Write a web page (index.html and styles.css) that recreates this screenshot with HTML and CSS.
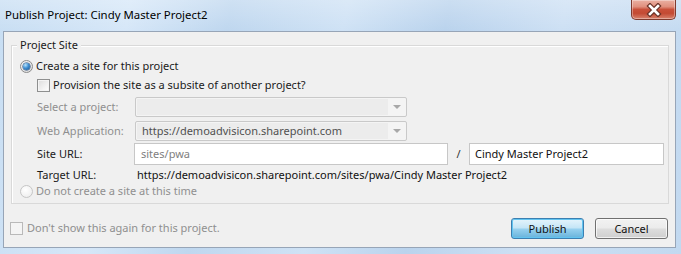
FILE: index.html
```html
<!DOCTYPE html>
<html>
<head>
<meta charset="utf-8">
<title>Publish Project</title>
<link rel="stylesheet" href="styles.css">
</head>
<body>
<div class="window">
  <div class="titlebar">
    <span class="title">Publish Project: Cindy Master Project2</span>
    <div class="close">
      <svg width="20" height="14" viewBox="0 0 20 14">
        <path d="M6 3 L14 11 M14 3 L6 11" stroke="#6b3328" stroke-width="5" stroke-linecap="square" fill="none"/>
        <path d="M6 3 L14 11 M14 3 L6 11" stroke="#ffffff" stroke-width="2.6" stroke-linecap="square" fill="none"/>
      </svg>
    </div>
  </div>
  <div class="client">
    <div class="group">
      <span class="legend">Project Site</span>
      <div class="row r-radio1">
        <span class="radio checked"><span class="dot"></span></span>
        <span class="txt">Create a site for this project</span>
      </div>
      <div class="row r-check">
        <span class="check"></span>
        <span class="txt">Provision the site as a subsite of another project?</span>
      </div>
      <div class="row r-field r-combo1">
        <span class="lbl disabled">Select a project:</span>
        <div class="combo"><span class="combo-text"></span><span class="arrow"></span></div>
      </div>
      <div class="row r-field r-combo2">
        <span class="lbl disabled">Web Application:</span>
        <div class="combo"><span class="combo-text">https://demoadvisicon.sharepoint.com</span><span class="arrow"></span></div>
      </div>
      <div class="row r-field r-url">
        <span class="lbl lbl-url">Site URL:</span>
        <div class="input input-site"><span class="ph">sites/pwa</span></div>
        <span class="slash">/</span>
        <div class="input input-name">Cindy Master Project2</div>
      </div>
      <div class="row r-field r-target">
        <span class="lbl lbl-target">Target URL:</span>
        <span class="target">https://demoadvisicon.sharepoint.com/sites/pwa/Cindy Master Project2</span>
      </div>
      <div class="row r-radio2">
        <span class="radio off"></span>
        <span class="txt disabled">Do not create a site at this time</span>
      </div>
    </div>
    <div class="footer">
      <div class="dontshow">
        <span class="check off"></span>
        <span class="txt disabled">Don't show this again for this project.</span>
      </div>
      <div class="buttons">
        <button class="btn btn-default" type="button">Publish</button>
        <button class="btn" type="button">Cancel</button>
      </div>
    </div>
  </div>
</div>
</body>
</html>
```
FILE: styles.css
```css
html, body {
  margin: 0;
  padding: 0;
}
body {
  width: 681px;
  height: 254px;
  overflow: hidden;
  font-family: "Noto Sans", "Open Sans", sans-serif;
  font-size: 11px;
  color: #1a1a1a;
}
.window {
  width: 681px;
  height: 254px;
  box-sizing: border-box;
  display: flex;
  flex-direction: column;
  background:
    linear-gradient(180deg, rgba(255,255,255,0.25) 0px, rgba(255,255,255,0) 30px),
    linear-gradient(100deg, #c8def3 0%, #d6e7f8 18%, #bfd7ef 32%, #cfe2f5 48%, #bad3ed 62%, #cde0f4 78%, #c2d9f0 100%);
}
.titlebar {
  height: 31px;
  display: flex;
  justify-content: space-between;
  align-items: flex-start;
  flex: none;
}
.title {
  font-size: 11.4px;
  line-height: 16px;
  margin-top: 7px;
  margin-left: 5px;
  color: #000;
}
.close {
  width: 43px;
  height: 19px;
  margin-right: 5px;
  border: 1px solid #7f3a2e;
  border-top: none;
  border-radius: 0 0 5px 5px;
  background: linear-gradient(180deg, #eab0a2 0%, #e0907e 35%, #c9503a 50%, #c34a33 70%, #d8826d 100%);
  box-shadow: inset 0 0 0 1px rgba(255,255,255,0.35);
  display: flex;
  align-items: center;
  justify-content: center;
}
.close svg { display: block; }
.client {
  margin: 0 5px 0 3px;
  height: 217px;
  box-sizing: border-box;
  border: 1px solid #97a5b7;
  background: #f0f0f0;
  display: flex;
  flex-direction: column;
}
.group {
  position: relative;
  margin: 13px 6px 0 7px;
  border: 1px solid #d9d9d9;
  box-shadow: 1px 1px 0 #fff inset;
  padding: 12px 0 3px 8px;
  height: 159px;
  box-sizing: border-box;
}
.legend {
  position: absolute;
  left: 5px;
  top: -9px;
  padding: 0 3px;
  background: #f0f0f0;
  line-height: 16px;
}
.row {
  display: flex;
  align-items: center;
}
.txt { line-height: 16px; }
.r-radio1 { height: 16px; }
.r-check { height: 16px; margin-top: 3px; padding-left: 17px; }
.r-check .txt { margin-left: 3px; }
.r-radio1 .txt { margin-left: 3px; }
.r-field { padding-left: 17px; }
.r-combo1 { height: 20px; margin-top: 4px; }
.r-combo2 { height: 20px; margin-top: 4px; }
.r-url { height: 22px; margin-top: 2px; }
.r-target { height: 14px; margin-top: 3px; }
.r-radio2 { height: 16px; margin-top: 1px; }
.r-radio2 .txt { margin-left: 3px; }
.lbl {
  width: 98px;
  flex: none;
  line-height: 16px;
}
.lbl-url { width: 97px; }
.lbl-target { width: 100px; }
.disabled { color: #8f8f8f; }
.radio {
  width: 13px;
  height: 13px;
  box-sizing: border-box;
  border-radius: 50%;
  border: 1px solid #8b8b8b;
  background: radial-gradient(circle at 40% 35%, #ffffff 0%, #e8e8e8 60%, #cfcfcf 100%);
  display: flex;
  align-items: center;
  justify-content: center;
  flex: none;
}
.radio .dot {
  width: 7px;
  height: 7px;
  border-radius: 50%;
  background: radial-gradient(circle at 35% 30%, #b9e3fb 0%, #3f8fd2 45%, #184d86 100%);
  box-shadow: 0 0 0 0.5px #1c3e6a;
}
.radio.off {
  border-color: #c6c6c6;
  background: radial-gradient(circle at 40% 35%, #ffffff 0%, #f0f0f0 70%, #e2e2e2 100%);
}
.check {
  width: 13px;
  height: 13px;
  box-sizing: border-box;
  border: 1px solid #8e8f8f;
  background: linear-gradient(135deg, #dcdcdc 0%, #f2f2f2 60%, #ffffff 100%);
  box-shadow: inset 0 0 0 1px #f4f4f4;
  flex: none;
}
.check.off {
  border-color: #b9b9b9;
  background: #f4f4f4;
  box-shadow: none;
}
.combo {
  width: 272px;
  height: 20px;
  box-sizing: border-box;
  border: 1px solid #c9c9c9;
  border-radius: 2px;
  background: #f4f4f4;
  display: flex;
  align-items: center;
  position: relative;
}
.combo-text {
  flex: 1;
  height: 16px;
  margin: 1px 0 1px 1px;
  padding-left: 5px;
  background: #ececec;
  line-height: 16px;
  color: #505050;
  white-space: nowrap;
  overflow: hidden;
  margin-right: 18px;
}
.arrow {
  position: absolute;
  right: 5px;
  top: 7px;
  width: 0;
  height: 0;
  border-left: 4px solid transparent;
  border-right: 4px solid transparent;
  border-top: 4px solid #a8a8a8;
}
.input {
  height: 22px;
  box-sizing: border-box;
  border: 1px solid #c7c7c7;
  background: #fff;
  line-height: 19px;
  padding-left: 6px;
  white-space: nowrap;
}
.input-site { width: 314px; }
.ph { color: #808080; }
.slash {
  width: 21px;
  text-align: center;
  color: #333;
  line-height: 16px;
}
.input-name { width: 195px; padding-left: 5px; color: #111; }
.target { line-height: 14px; color: #111; white-space: nowrap; }
.footer {
  flex: 1;
  display: flex;
  align-items: center;
  justify-content: space-between;
  padding: 6px 7px 0 6px;
}
.dontshow {
  display: flex;
  align-items: center;
  margin-top: -1px;
}
.dontshow .txt { margin-left: 4px; }
.buttons {
  display: flex;
  gap: 11px;
}
.btn {
  width: 73px;
  height: 21px;
  box-sizing: border-box;
  border: 1px solid #707070;
  border-radius: 3px;
  font-family: "Noto Sans", "Open Sans", sans-serif;
  font-size: 11px;
  color: #111;
  padding: 0;
  line-height: 17px;
  background: linear-gradient(180deg, #f2f2f2 0%, #ebebeb 48%, #dddddd 52%, #cfcfcf 100%);
  box-shadow: inset 0 0 0 1px rgba(255,255,255,0.7);
}
.btn-default {
  border-color: #3c7fb1;
  background: linear-gradient(180deg, #e5f4fc 0%, #c4e5f6 48%, #98d1ef 52%, #68b3db 100%);
  box-shadow: inset 0 0 0 1px #62c4f0;
}
```
